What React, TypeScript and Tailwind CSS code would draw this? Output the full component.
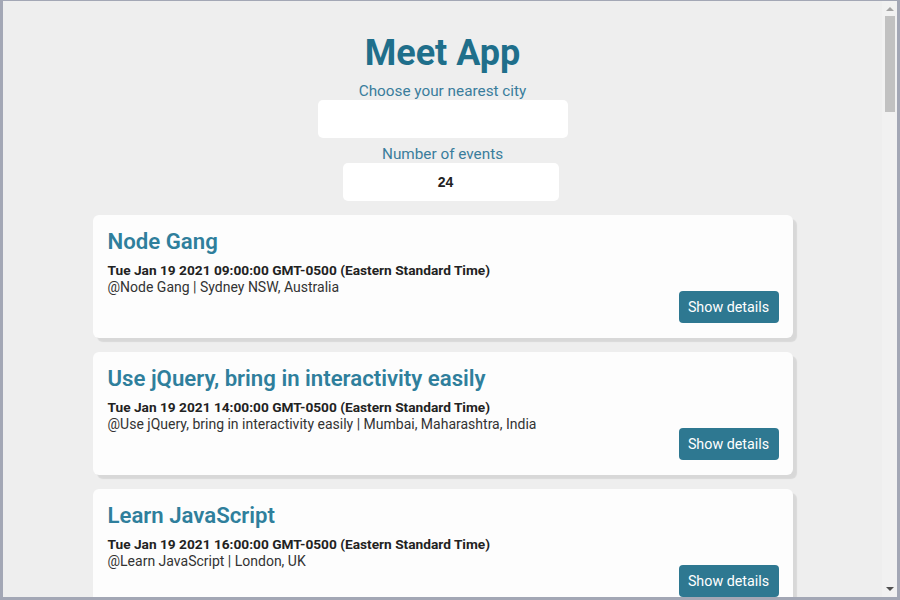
import React from "react";

type Event = {
  summary: string;
  start: string;
  location: string;
};

const baseEvents: Event[] = [
  {
    summary: "Node Gang",
    start: "Tue Jan 19 2021 09:00:00 GMT-0500 (Eastern Standard Time)",
    location: "Sydney NSW, Australia",
  },
  {
    summary: "Use jQuery, bring in interactivity easily",
    start: "Tue Jan 19 2021 14:00:00 GMT-0500 (Eastern Standard Time)",
    location: "Mumbai, Maharashtra, India",
  },
  {
    summary: "Learn JavaScript",
    start: "Tue Jan 19 2021 16:00:00 GMT-0500 (Eastern Standard Time)",
    location: "London, UK",
  },
  {
    summary: "React is Fun",
    start: "Wed Jan 20 2021 10:00:00 GMT-0500 (Eastern Standard Time)",
    location: "Berlin, Germany",
  },
  {
    summary: "AngularJS Meetup",
    start: "Wed Jan 20 2021 13:00:00 GMT-0500 (Eastern Standard Time)",
    location: "Santiago, Chile",
  },
  {
    summary: "Learn JavaScript",
    start: "Thu Jan 21 2021 16:00:00 GMT-0500 (Eastern Standard Time)",
    location: "Dubai - United Arab Emirates",
  },
];

const events: Event[] = Array.from({ length: 24 }, (_, i) => baseEvents[i % baseEvents.length]);

function EventCard({ event }: { event: Event }) {
  return (
    <div className="flex h-[123px] w-[700px] shrink-0 flex-col rounded-[6px] bg-[#fdfdfd] px-[15px] pt-[13px] shadow-[4px_4px_1px_rgba(0,0,0,0.09)]">
      <h2 className="text-[22.2px] font-semibold leading-[26px] text-[#2f7f9c]">{event.summary}</h2>
      <p className="mt-[8px] text-[13.7px] font-bold leading-[17px] text-[#222]">{event.start}</p>
      <p className="text-[14px] leading-[16px] text-[#333]">
        @{event.summary} | {event.location}
      </p>
      <button className="-mt-[4px] mr-[-1px] h-[32px] w-[100px] self-end rounded-[4px] bg-[#2e7891] text-[14.3px] leading-none text-white">
        Show details
      </button>
    </div>
  );
}

// window scrollbar as seen in the screenshot
function Scrollbar() {
  return (
    <div className="flex h-full w-[15px] shrink-0 flex-col items-center bg-[#f1f1f1]">
      <div className="mt-[6px] h-0 w-0 border-x-[4px] border-b-[4px] border-x-transparent border-b-[#a3a3a3]" />
      <div className="mt-[5px] h-[96px] w-[10px] bg-[#c1c1c1]" />
      <div className="flex-1" />
      <div className="mb-[6px] h-0 w-0 border-x-[4px] border-t-[4px] border-x-transparent border-t-[#505050]" />
    </div>
  );
}

export default function App() {
  return (
    <div className="flex h-[600px] w-[900px] border-b-[3px] border-l-[3px] border-r-[3px] border-t border-[#a3a7b5] font-['Roboto',sans-serif]">
      <div className="h-full flex-1 overflow-hidden bg-[#eeeeee]">
        <div className="flex flex-col items-center pb-[20px]">
          <h1 className="mt-[31px] text-[36px] font-bold leading-[42px] text-[#1f6f8b]">Meet App</h1>
          <label className="mt-[8px] text-[15.3px] leading-[18px] text-[#3a7d9c]">Choose your nearest city</label>
          <input className="h-[38px] w-[250px] rounded-[5px] bg-white outline-none" />
          <label className="mt-[7px] text-[15.3px] leading-[18px] text-[#3a7d9c]">Number of events</label>
          <input
            defaultValue="24"
            className="ml-[16px] h-[38px] w-[216px] rounded-[5px] bg-white pr-[10px] text-center font-['Liberation_Sans',sans-serif] text-[14px] font-bold text-[#222] outline-none"
          />
          <div className="mt-[14px] flex flex-col gap-[14px]">
            {events.map((e, i) => (
              <EventCard key={i} event={e} />
            ))}
          </div>
        </div>
      </div>
      <Scrollbar />
    </div>
  );
}
